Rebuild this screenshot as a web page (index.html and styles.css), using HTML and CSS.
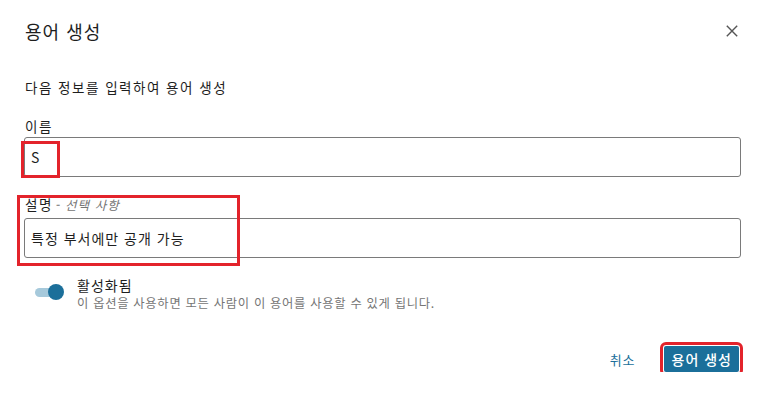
FILE: index.html
```html
<!DOCTYPE html>
<html lang="ko">
<head>
    <meta charset="UTF-8">
    <meta name="viewport" content="width=device-width, initial-scale=1.0">
    <title>용어 생성</title>
    <link rel="stylesheet" href="styles.css">
</head>
<body>
    <div class="dialog">
        <header class="dialog-header">
            <h1 class="dialog-title">용어 생성</h1>
            <button class="close-btn" aria-label="닫기">
                <svg width="12" height="12" viewBox="0 0 12 12">
                    <path d="M0.8 0.8L11.2 11.2M11.2 0.8L0.8 11.2" stroke="#555" stroke-width="1.4" fill="none"/>
                </svg>
            </button>
        </header>

        <p class="intro">다음 정보를 입력하여 용어 생성</p>

        <div class="field">
            <label class="field-label" for="term-name">이름</label>
            <div class="input-wrap">
                <input id="term-name" class="text-input" type="text" value="S">
                <span class="mark mark-name"></span>
            </div>
        </div>

        <div class="field field-desc">
            <label class="field-label field-label-desc" for="term-desc">설명<span class="optional">- 선택 사항</span></label>
            <input id="term-desc" class="text-input" type="text" value="특정 부서에만 공개 가능">
            <span class="mark mark-desc"></span>
        </div>

        <div class="toggle-row">
            <span class="switch"><span class="switch-knob"></span></span>
            <div class="toggle-text">
                <div class="toggle-title">활성화됨</div>
                <div class="toggle-hint">이 옵션을 사용하면 모든 사람이 이 용어를 사용할 수 있게 됩니다.</div>
            </div>
        </div>

        <footer class="dialog-footer">
            <button class="btn-link">취소</button>
            <button class="btn-primary">용어 생성</button>
        </footer>
    </div>
</body>
</html>
```

FILE: styles.css
```css
* {
    box-sizing: border-box;
    margin: 0;
    padding: 0;
}

body {
    font-family: "Noto Sans CJK KR", "Noto Sans", sans-serif;
    color: #1e1e1e;
    background-color: #ffffff;
}

.dialog {
    padding: 19px 17px 0 24px;
}

.dialog-header {
    display: flex;
    justify-content: space-between;
    align-items: center;
    height: 24px;
}

.dialog-title {
    font-size: 18px;
    font-weight: 400;
    line-height: 24px;
    letter-spacing: 1px;
    padding-left: 1px;
}

.close-btn {
    width: 18px;
    height: 18px;
    border: none;
    background: none;
    display: flex;
    justify-content: center;
    align-items: center;
    cursor: pointer;
}

.intro {
    margin-top: 34px;
    font-size: 13.5px;
    line-height: 20px;
    letter-spacing: 1.5px;
    padding-left: 1px;
}

.field {
    margin-top: 19px;
}

.field-label {
    display: block;
    font-size: 13.5px;
    line-height: 20px;
    letter-spacing: 1.5px;
    margin-bottom: 1px;
    padding-left: 1px;
}

.field-desc {
    position: relative;
    margin-top: 17px;
}

.field-label-desc {
    margin-bottom: 3px;
}

.optional {
    padding-left: 2px;
    font-size: 12.5px;
    font-style: italic;
    letter-spacing: 1.1px;
    color: #757575;
}

.input-wrap {
    position: relative;
}

.text-input {
    display: block;
    width: 100%;
    height: 40px;
    padding: 0 6px;
    border: 1px solid #7a7a7a;
    border-radius: 3px;
    font-family: inherit;
    font-size: 14px;
    letter-spacing: 1px;
    color: #1e1e1e;
    background: #ffffff;
    outline: none;
}

/* red highlight boxes drawn over the form */
.mark {
    position: absolute;
    border: 3px solid #e3232b;
    pointer-events: none;
}

.mark-name {
    left: -3px;
    top: 4px;
    width: 39px;
    height: 37px;
}

.mark-desc {
    left: -7px;
    top: 1px;
    width: 223px;
    bottom: -8px;
}

.toggle-row {
    display: flex;
    align-items: flex-start;
    margin-top: 17px;
}

.switch {
    position: relative;
    width: 29px;
    height: 16px;
    margin: 9px 13px 0 11px;
    flex-shrink: 0;
}

.switch::before {
    content: "";
    position: absolute;
    left: 0;
    top: 4px;
    width: 26px;
    height: 9px;
    border-radius: 5px;
    background-color: #a6c9db;
}

.switch-knob {
    position: absolute;
    right: 0;
    top: 0;
    width: 16px;
    height: 16px;
    border-radius: 50%;
    background-color: #1b6f9a;
}

.toggle-title {
    font-size: 14px;
    line-height: 20px;
    letter-spacing: 1px;
}

.toggle-hint {
    font-size: 12.3px;
    line-height: 16px;
    letter-spacing: 0.7px;
    color: #757575;
}

.dialog-footer {
    display: flex;
    justify-content: flex-end;
    align-items: center;
    gap: 28px;
    margin-top: 35px;
    padding-right: 2px;
}

.btn-link {
    border: none;
    background: none;
    font-family: inherit;
    font-size: 13px;
    letter-spacing: 1px;
    color: #1b6f9a;
    cursor: pointer;
}

.btn-primary {
    height: 26px;
    padding: 0 7px 0 8px;
    border: none;
    border-radius: 2px;
    background-color: #1b6f9a;
    color: #ffffff;
    font-family: inherit;
    font-size: 14px;
    font-weight: 500;
    letter-spacing: 1px;
    cursor: pointer;
    outline: 3px solid #e3232b;
    outline-offset: 1px;
}
```
